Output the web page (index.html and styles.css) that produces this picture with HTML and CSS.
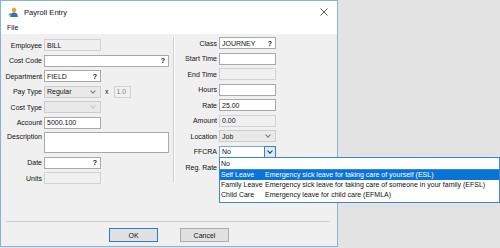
FILE: index.html
```html
<!DOCTYPE html>
<html>
<head>
	<title>Payroll Entry</title>
	<link rel="stylesheet" href="styles.css">
</head>
<body>
	<div class="window">
		<div class="titlebar">
			<svg class="app-icon" width="10" height="10" viewBox="0 0 10 10">
				<circle cx="6" cy="3" r="2.2" fill="#f2a01e" />
				<path d="M2.2 10 C2.2 6.6 4 5.6 6 5.6 C8 5.6 9.8 6.6 9.8 10 Z" fill="#2f6fc4" />
				<path d="M0.4 8.6 C0.6 6.8 1.6 6 3 6 L3.4 8.6 Z" fill="#7cb83a" />
			</svg>
			<span class="title">Payroll Entry</span>
			<svg class="close" width="8" height="8" viewBox="0 0 8 8">
				<path d="M0.5 0.5 L7.5 7.5 M7.5 0.5 L0.5 7.5" stroke="#444" stroke-width="0.9" fill="none" />
			</svg>
		</div>
		<div class="menubar"><span>File</span></div>

		<div class="main">
			<div class="form left">
				<label>Employee</label>
				<div class="field short disabled">BILL</div>

				<label>Cost Code</label>
				<div class="field wide lookup"><span></span><b>?</b></div>

				<label>Department</label>
				<div class="field short lookup"><span>FIELD</span><b>?</b></div>

				<label>Pay Type</label>
				<div class="inline">
					<div class="field short select"><span>Regular</span><i class="chev"></i></div>
					<span class="times">x</span>
					<div class="field tiny disabled">1.0</div>
				</div>

				<label>Cost Type</label>
				<div class="field short select disabled"><span></span><i class="chev faint"></i></div>

				<label>Account</label>
				<div class="field short">5000.100</div>

				<label class="top">Description</label>
				<div class="field wide area"></div>

				<label>Date</label>
				<div class="field short lookup"><span></span><b>?</b></div>

				<label>Units</label>
				<div class="field short disabled"></div>
			</div>

			<div class="divider"></div>

			<div class="form right">
				<label>Class</label>
				<div class="field short lookup"><span>JOURNEY</span><b>?</b></div>

				<label>Start Time</label>
				<div class="field short"></div>

				<label>End Time</label>
				<div class="field short disabled"></div>

				<label>Hours</label>
				<div class="field short"></div>

				<label>Rate</label>
				<div class="field short">25.00</div>

				<label>Amount</label>
				<div class="field short disabled">0.00</div>

				<label>Location</label>
				<div class="field short select disabled"><span>Job</span><i class="chev"></i></div>

				<label>FFCRA</label>
				<div class="field short combo"><span>No</span><em class="drop"><i class="chev dark"></i></em></div>

				<label>Reg. Rate</label>
				<div class="field short blank"></div>
			</div>
		</div>

		<div class="footer">
			<button class="btn default">OK</button>
			<button class="btn">Cancel</button>
		</div>

		<ul class="popup">
			<li class="first"><span class="code">No</span></li>
			<li class="selected"><span class="code">Self Leave</span><span>Emergency sick leave for taking care of yourself (ESL)</span></li>
			<li><span class="code">Family Leave</span><span>Emergency sick leave for taking care of someone in your family (EFSL)</span></li>
			<li><span class="code">Child Care</span><span>Emergency leave for child care (EFMLA)</span></li>
		</ul>
	</div>
</body>
</html>
```

FILE: styles.css
```css
html, body {
	margin: 0;
	padding: 0;
	background-color: #e3e3e3;
	font-family: "Liberation Sans", Arial, sans-serif;
	font-size: 7px;
	color: #111;
}
.window {
	position: relative;
	width: 336px;
	height: 245px;
	border: solid 1px #86b3e0;
	background-color: #f0f0f0;
	display: flex;
	flex-direction: column;
}
.titlebar {
	height: 22px;
	background-color: #fff;
	display: flex;
	align-items: center;
	padding: 0 7px;
}
.app-icon {
	margin-right: 6px;
}
.title {
	font-size: 7.6px;
	flex: 1;
}
.close {
	margin-right: 2px;
}
.menubar {
	height: 11px;
	background-color: #fff;
	padding-left: 6px;
	line-height: 10px;
}

.main {
	flex: 1;
	display: flex;
	align-items: flex-start;
}
.form {
	display: grid;
	grid-template-columns: 41px auto;
	column-gap: 2px;
	row-gap: 3.5px;
	align-items: center;
}
.form label {
	text-align: right;
	white-space: nowrap;
}
.form label.top {
	align-self: start;
	padding-top: 1px;
}
.left {
	width: 171px;
	padding-top: 5px;
}
.right {
	padding-top: 3px;
}
.divider {
	width: 1px;
	height: 146px;
	margin: 3px 1px 0 1px;
	background-color: #cfcfcf;
	border-right: solid 1px #fff;
}

.field {
	box-sizing: border-box;
	height: 12px;
	border: solid 1px #a9a9a9;
	background-color: #fff;
	padding: 0 2px;
	display: flex;
	align-items: center;
	justify-content: space-between;
	white-space: nowrap;
}
.field.short {
	width: 57px;
}
.field.wide {
	width: 125px;
}
.field.tiny {
	width: 17px;
	color: #8a8a8a;
}
.field.area {
	height: 21px;
}
.field.disabled {
	background-color: #f0f0f0;
	border-color: #d2d2d2;
}
.field.blank {
	visibility: hidden;
}
.field b {
	font-size: 7px;
	font-weight: bold;
	margin-right: 1px;
}
.field.select {
	background-color: #e9e9e9;
	border-color: #cdcdcd;
}
.field.select.disabled {
	background-color: #e9e9e9;
}
.chev {
	width: 3px;
	height: 3px;
	border-right: solid 1px #777;
	border-bottom: solid 1px #777;
	transform: rotate(45deg);
	margin: 0 3px 2px 0;
}
.chev.faint {
	border-color: #c4c4c4;
}
.chev.dark {
	border-color: #333;
	margin: 0 0 2px 0;
}
.field.combo {
	padding-right: 0;
	border-color: #7aa7d6;
}
.drop {
	align-self: stretch;
	width: 10px;
	margin: -1px -1px -1px 0;
	border: solid 1px #3c7fc4;
	background-color: #dbeaf7;
	display: flex;
	align-items: center;
	justify-content: center;
}
.inline {
	display: flex;
	align-items: center;
}
.times {
	margin: 0 5px 0 4px;
}

.footer {
	height: 25px;
	margin: 0 7px 0 5px;
	border-top: solid 1px #cdcdcd;
	display: flex;
	justify-content: center;
	gap: 22px;
	padding: 6px 0 0 2px;
	box-sizing: border-box;
}
.btn {
	width: 49px;
	height: 14px;
	border: solid 1px #adadad;
	background-color: #e1e1e1;
	font-family: "Liberation Sans", Arial, sans-serif;
	font-size: 7px;
	padding: 0;
	color: #111;
}
.btn.default {
	border-color: #2a7ad2;
}

.popup {
	position: absolute;
	left: 218px;
	top: 156px;
	width: 281px;
	margin: 0;
	padding: 0 0 2px 0;
	list-style: none;
	background-color: #fff;
	border: solid 1px #3a86d4;
	box-sizing: border-box;
}
.popup li {
	height: 10px;
	line-height: 10px;
	display: flex;
	white-space: nowrap;
	padding-left: 1px;
}
.popup li.first {
	height: 12px;
	line-height: 12px;
	border: solid 1px #3a86d4;
	border-top: none;
	box-sizing: border-box;
	margin: 0 -1px;
}
.popup li.selected {
	background-color: #0a74d6;
	color: #fff;
}
.popup .code {
	width: 44px;
}
```
